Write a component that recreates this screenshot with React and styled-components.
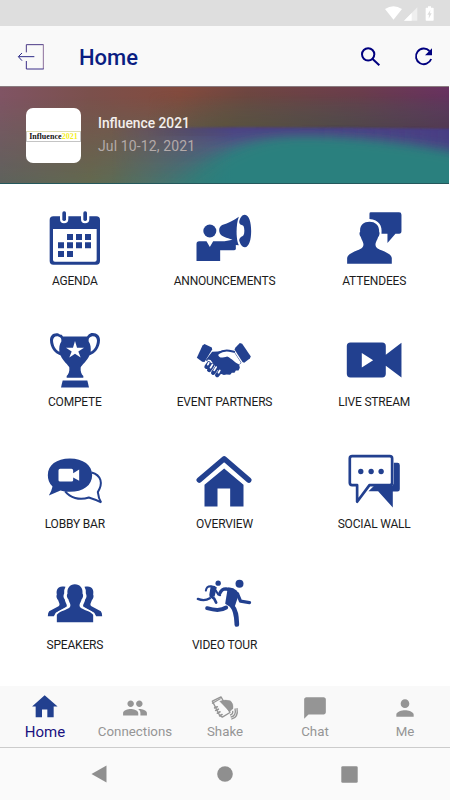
import React from "react";
import styled, { createGlobalStyle } from "styled-components";
import { MdPeople, MdChatBubble, MdPerson } from "react-icons/md";

const Agenda = () => (
  <Glyph viewBox="30 24 180 180">
    <path
      fillRule="evenodd"
      d="M55 49H75V57Q75 70 87 70Q100 70 100 57V49H138V57Q138 70 150 70Q163 70 163 57V49H184Q195 49 195 60V183Q195 194 184 194H55Q44 194 44 183V60Q44 49 55 49ZM54 87V179Q54 185 60 185H179Q185 185 185 179V87Z"
    />
    <rect x="82" y="34" width="11" height="29" rx="5" />
    <rect x="145" y="34" width="11" height="29" rx="5" />
    <path d="M96 102h18v18h-18zM123 102h18v18h-18zM150 102h18v18h-18zM69 127h18v18h-18zM96 127h18v18h-18zM123 127h18v18h-18zM150 127h18v18h-18zM69 153h18v18h-18zM96 153h18v18h-18z" />
  </Glyph>
);

const Announcements = () => (
  <Glyph viewBox="73.5 24 180 180">
    <circle cx="121" cy="93" r="19.5" />
    <path d="M89 124H111L121 141L131 124H165L189 119C171 113 156 111 151 100C147 90 149 80 158 75C176 69 194 60 208 50C202 65 200 91 202 111C203 124 206 131 208 136L199 135V147Q198 151 193 151H152V183H81V132Q81 124 89 124Z" />
    <path d="M226 44C239 45 245 67 245 93C245 119 239 141 226 142C218 142 212 133 209 121C211 110 218 111 222 106C226 99 225 85 222 78C218 74 211 77 209 66C211 54 217 44 226 44Z" />
  </Glyph>
);

const Attendees = () => (
  <Glyph viewBox="42.6 24 180 180">
    <path d="M123 37H208Q215 37 215 44V93Q215 101 208 101H197L173 129V101H155C158 77 148 60 119 57V41Q119 37 123 37Z" />
    <path d="M119 65C137 65 149 76 148 95C151 99 148 108 145 111C142 121 138 125 137 132C137 142 142 146 155 151C171 158 184 163 186 174V191H52V174C54 163 67 158 83 151C96 146 101 142 101 132C100 125 96 121 93 111C90 108 87 99 91 95C89 76 101 65 119 65Z" />
  </Glyph>
);

const Compete = () => (
  <Glyph viewBox="30 28.8 180 180">
    <path
      fillRule="evenodd"
      d="M76 43Q79 40 84 48H156Q161 40 169 38C185 36 195 45 195 59C195 83 179 101 163 105C157 121 139 134 137 141C136 154 139 160 145 167V172H95V167C101 160 104 154 103 141C101 134 83 121 77 105C61 101 45 83 45 59C45 45 55 36 70 39ZM70 48C60 46 54 52 54 61C55 76 62 88 73 94C72 82 73 72 79 63C80 55 78 50 70 48ZM170 48C162 50 160 55 161 63C167 72 168 82 167 94C178 88 185 76 186 61C186 52 180 46 170 48ZM120 62L114 82H93L110 93L103 111L120 100L137 111L130 93L147 82H126Z"
    />
    <path d="M83 180H157L162 201H78Z" />
  </Glyph>
);

const Partners = () => (
  <Glyph viewBox="73.5 28.8 180 180">
    <path d="M99 75L105 71L127 81L128 87L105 125L98 124L82 112Z" />
    <path d="M211 68L218 70L244 108L241 114L224 127L219 125L195 87L198 81Z" />
    <path d="M128 94L144 93L160 91L180 90L194 93L216 127L209 133L211 142L207 150L199 150L195 157L187 157L182 163L171 162L163 164L154 160L123 119L115 117L113 123L109 119Z" />
    <path d="M146 104C155 88 177 87 193 94L214 126L209 132C198 128 187 114 173 108C160 111 151 116 146 104Z" fill="#fff" />
    <path d="M145 99Q162 88 179 91L194 94" fill="none" stroke="#22408f" strokeWidth="6" strokeLinecap="round" />
    <path d="M118 129L111 139M129 134L119 149M141 143L131 157M152 153L143 164" stroke="#22408f" strokeWidth="13" strokeLinecap="round" />
    <path d="M118 127L115 133M129 132L123 142M140 140L134 150M151 150L147 157" stroke="#fff" strokeWidth="5" strokeLinecap="round" />
  </Glyph>
);

const Stream = () => (
  <Glyph viewBox="42.6 28.8 180 180">
    <path
      fillRule="evenodd"
      d="M62 66H157Q168 66 168 77V103L215 67V171L168 136V160Q168 171 157 171H62Q51 171 51 160V77Q51 66 62 66ZM96 98V141L130 119.5Z"
    />
  </Glyph>
);

const Lobby = () => (
  <Glyph viewBox="29.5 18.6 180 180">
    <path
      d="M169 83C199 91 204 116 188 142Q190 161 198 173Q181 164 161 158C132 168 104 158 90 140"
      fill="none"
      stroke="#22408f"
      strokeWidth="6"
    />
    <path d="M104 41C144 41 171 61 171 91C171 121 144 141 104 141C92 141 84 139 76 137L41 152Q49 140 52 125C42 115 38 103 38 91C38 61 64 41 104 41Z" />
    <path d="M75 72H109Q114 72 114 77V85L132 74V108L114 98V106Q114 110 109 110H75Q70 110 70 106V77Q70 72 75 72Z" fill="#fff" />
  </Glyph>
);

const Overview = () => (
  <Glyph viewBox="478.5 18.6 180 180">
    <path d="M494 106L569 42L643 106" fill="none" stroke="#22408f" strokeWidth="16" strokeLinecap="round" strokeLinejoin="round" />
    <path d="M569 71L627 120V185H587V131H549V185H510V120Z" />
  </Glyph>
);

const Social = () => (
  <Glyph viewBox="42.6 18.6 180 180">
    <path d="M192 54H203Q210 54 210 61V133Q210 140 203 140H189V188L145 139H116L133 123H181Q192 123 192 112Z" />
    <path
      d="M67 34H180Q187 34 187 41V114Q187 121 180 121H119L82 171V121H67Q60 121 60 114V41Q60 34 67 34Z"
      fill="#fff"
      stroke="#22408f"
      strokeWidth="8"
      strokeLinejoin="round"
    />
    <circle cx="93" cy="80" r="8" />
    <circle cx="124" cy="80" r="8" />
    <circle cx="154" cy="80" r="8" />
  </Glyph>
);

const Speakers = () => (
  <Glyph viewBox="29.5 8.4 180 180">
    <path d="M91 50C69 44 62 58 65 73C62 79 65 86 69 90C72 99 76 103 70 108L42 123Q38 127 38 138H56L62 128L94 110C98 104 90 98 89 88C84 83 84 75 87 70Q86 58 91 50Z" />
    <path d="M148 50C170 44 177 58 174 73C177 79 174 86 170 90C167 99 163 103 169 108L197 123Q201 127 201 138H183L177 128L145 110C141 104 149 98 150 88C155 83 155 75 152 70Q153 58 148 50Z" />
    <path
      d="M119 42C135 42 144 54 142 70C146 75 143 84 139 88C137 98 130 103 135 111C143 119 168 123 174 134V156H65V134C71 123 96 119 104 111C109 103 102 98 100 88C96 84 93 75 97 70C95 54 104 42 119 42Z"
      stroke="#fff"
      strokeWidth="10"
      paintOrder="stroke"
    />
  </Glyph>
);

const Tour = () => (
  <Glyph viewBox="478.5 8.4 180 180">
    <circle cx="615" cy="41" r="12" />
    <circle cx="551" cy="39" r="8" />
    <g fill="none" stroke="#22408f" strokeLinecap="round" strokeLinejoin="round">
      <path d="M556 69Q562 56 574 56L590 60" strokeWidth="10" />
      <path d="M609 71L618 93L645 97" strokeWidth="10" />
      <path d="M592 106C606 122 606 143 607 163" strokeWidth="14" />
      <path d="M518 114C545 122 560 122 575 112" strokeWidth="12" />
      <path d="M514 61Q516 48 528 48L540 50" strokeWidth="6" />
      <path d="M544 61L551 73L557 75" strokeWidth="6" />
      <path d="M490 86Q510 94 526 84" strokeWidth="7" />
      <path d="M529 78L539 85L545 97" strokeWidth="8" />
    </g>
    <path d="M580 52Q596 50 605 60L614 70L598 117L572 101Z" />
    <path d="M529 46L547 51L540 80L524 76Z" />
  </Glyph>
);

const HomeGlyph = () => (
  <TabGlyph viewBox="90 37.5 90 90" fill="#22408f">
    <path d="M134 44L172 77V78H161V110H142V87H126V110H107V78H97V77Z" />
  </TabGlyph>
);

const ShakeGlyph = () => (
  <TabGlyph viewBox="630 37.5 90 90" fill="none" stroke="#959595">
    <path d="M637 62L663 49L690 96L667 110L659 105Z" strokeWidth="4" strokeLinejoin="round" />
    <path d="M636 69L662 54" strokeWidth="4" />
    <path d="M659 62Q676 56 691 61Q701 69 699 84L689 94Z" fill="#959595" strokeWidth="1" />
    <path d="M644 82l8-3M647 90l8-4M652 98l8-4M659 106l7-4" strokeWidth="5" strokeLinecap="round" />
    <path d="M698 91Q700 101 690 104M705 84Q710 106 692 110M711 83Q716 112 694 116" strokeWidth="4" />
  </TabGlyph>
);

const tiles = [
  { label: "AGENDA", Icon: Agenda },
  { label: "ANNOUNCEMENTS", Icon: Announcements },
  { label: "ATTENDEES", Icon: Attendees },
  { label: "COMPETE", Icon: Compete },
  { label: "EVENT PARTNERS", Icon: Partners },
  { label: "LIVE STREAM", Icon: Stream },
  { label: "LOBBY BAR", Icon: Lobby },
  { label: "OVERVIEW", Icon: Overview },
  { label: "SOCIAL WALL", Icon: Social },
  { label: "SPEAKERS", Icon: Speakers },
  { label: "VIDEO TOUR", Icon: Tour },
];

const tabs = [
  { label: "Home", icon: <HomeGlyph />, active: true },
  { label: "Connections", icon: <MdPeople size={26} /> },
  { label: "Shake", icon: <ShakeGlyph /> },
  { label: "Chat", icon: <MdChatBubble size={26} /> },
  { label: "Me", icon: <MdPerson size={26} /> },
];

function BannerArt() {
  return (
    <Art viewBox="0 0 449 98" preserveAspectRatio="none">
      <defs>
        <linearGradient id="top">
          <stop offset="0" stopColor="#805464" />
          <stop offset="0.2" stopColor="#7b504c" />
          <stop offset="0.4" stopColor="#834b3e" />
          <stop offset="0.55" stopColor="#6f4641" />
          <stop offset="0.8" stopColor="#6b3d4c" />
          <stop offset="1" stopColor="#683260" />
        </linearGradient>
        <linearGradient id="low">
          <stop offset="0" stopColor="#5d625c" />
          <stop offset="0.2" stopColor="#62694f" />
          <stop offset="0.33" stopColor="#54705f" />
          <stop offset="0.5" stopColor="#347b78" />
        </linearGradient>
        <linearGradient id="mid">
          <stop offset="0.33" stopColor="#5b5038" stopOpacity="0" />
          <stop offset="0.5" stopColor="#5b5038" />
          <stop offset="0.75" stopColor="#504643" />
          <stop offset="1" stopColor="#52344e" />
        </linearGradient>
        <linearGradient id="blue" x2="0" y2="1">
          <stop offset="0" stopColor="#4b4084" />
          <stop offset="0.25" stopColor="#515a84" />
          <stop offset="0.75" stopColor="#3b787c" />
        </linearGradient>
        <linearGradient id="down" x2="0" y2="1">
          <stop offset="0.1" stopColor="#000" />
          <stop offset="1" stopColor="#fff" />
        </linearGradient>
        <linearGradient id="side">
          <stop offset="0.25" stopColor="#000" />
          <stop offset="0.52" stopColor="#fff" />
        </linearGradient>
        <linearGradient id="edge">
          <stop offset="0.6" stopColor="#473a84" stopOpacity="0" />
          <stop offset="1" stopColor="#473a84" />
        </linearGradient>
        <mask id="fadeDown">
          <rect width="449" height="98" fill="url(#down)" />
        </mask>
        <mask id="fadeMid">
          <rect width="449" height="50" fill="url(#down)" />
        </mask>
        <mask id="fadeSide">
          <rect width="449" height="98" fill="url(#side)" />
        </mask>
        <filter id="soft">
          <feGaussianBlur stdDeviation="1.2" />
        </filter>
        <filter id="softer" x="-20%" y="-40%" width="140%" height="180%">
          <feGaussianBlur stdDeviation="14 5" />
        </filter>
      </defs>
      <rect width="449" height="98" fill="url(#top)" />
      <rect width="449" height="98" fill="url(#low)" mask="url(#fadeDown)" />
      <rect width="449" height="50" fill="url(#mid)" mask="url(#fadeMid)" />
      <g mask="url(#fadeSide)">
        <path d="M60 43Q260 39 490 44V120H60Z" fill="url(#blue)" filter="url(#soft)" />
        <path d="M60 43Q260 39 490 44V80H60Z" fill="url(#edge)" filter="url(#soft)" />
        <path d="M150 130Q195 58 285 51Q380 48 500 75V140H150Z" fill="#2c807e" filter="url(#softer)" />
      </g>
      <path d="M0 97.5H449" stroke="#24585c" />
      <path d="M0 .5H449" stroke="#8a7c80" />
    </Art>
  );
}

export default function App() {
  return (
    <Screen>
      <GlobalStyle />
      <StatusBar>
        <svg width="17" height="14" viewBox="480 17 51 42" fill="#fff">
          <path d="M480 26Q505 9 531 26L505.5 58Z" />
        </svg>
        <svg width="14" height="14" viewBox="538 18 42 42" fill="#fff">
          <path d="M578 19V59H538Z" opacity="0.5" />
          <path d="M561 36V59H538Z" />
        </svg>
        <svg width="9" height="15" viewBox="601 16 27 45" fill="#fff">
          <path d="M610 17h9v4h6q2 0 2 2v35q0 2-2 2h-20q-2 0-2-2v-35q0-2 2-2h5z" />
          <path d="M617 28l-9 14h5l-1 12 9-16h-5z" fill="#dedede" />
        </svg>
      </StatusBar>
      <Header>
        <svg width="28" height="28" viewBox="51 129 84 84" fill="none">
          <path d="M79 157V134H130" stroke="#4b3a86" strokeWidth="3" />
          <path d="M130 133V207" stroke="#8c6f9c" strokeWidth="3" />
          <path d="M79 183V207H131" stroke="#3b2e88" strokeWidth="3" />
          <path d="M103 170H56M66 159L55 170L66 182" stroke="#2d2b88" strokeWidth="3" />
        </svg>
        <h1>Home</h1>
        <svg width="22" height="22" viewBox="401 136 66 66" fill="none" stroke="#00007f">
          <circle cx="428.5" cy="161" r="18.5" strokeWidth="6" />
          <path d="M441 174L462 194" strokeWidth="6" />
        </svg>
        <svg width="22" height="22" viewBox="564 138 66 66" fill="none" stroke="#00007f">
          <path d="M613.5 153A23.5 23.5 0 1 0 618.5 177" strokeWidth="5.5" />
          <path d="M621 145V166H600Z" fill="#00007f" stroke="none" />
        </svg>
      </Header>
      <Banner>
        <BannerArt />
        <Logo>
          <p>
            Influence<b>2021</b>
          </p>
        </Logo>
        <EventInfo>
          <h2>Influence 2021</h2>
          <p>Jul 10-12, 2021</p>
        </EventInfo>
      </Banner>
      <Grid>
        {tiles.map(({ label, Icon }) => (
          <Tile key={label}>
            <Icon />
            <p>{label}</p>
          </Tile>
        ))}
      </Grid>
      <TabBar>
        {tabs.map((tab) => (
          <Tab key={tab.label} $active={tab.active}>
            <span>{tab.icon}</span>
            <p>{tab.label}</p>
          </Tab>
        ))}
      </TabBar>
      <SystemNav>
        <svg width="16" height="18" viewBox="0 0 16 18">
          <path d="M15.5.5V17.5L.5 9Z" />
        </svg>
        <svg width="16" height="16" viewBox="0 0 16 16">
          <circle cx="8" cy="8" r="7.8" />
        </svg>
        <svg width="17" height="17" viewBox="0 0 17 17">
          <rect x=".3" y=".3" width="16.4" height="16.4" rx="1.3" />
        </svg>
      </SystemNav>
    </Screen>
  );
}

const GlobalStyle = createGlobalStyle`
  * {
    box-sizing: border-box;
    margin: 0;
    padding: 0;
  }
  body {
    background: #ffffff;
    font-family: Roboto, "Liberation Sans", sans-serif;
  }
  svg {
    display: block;
    flex-shrink: 0;
  }
`;

const Screen = styled.div`
  width: 450px;
  height: 800px;
  display: flex;
  flex-direction: column;
  overflow: hidden;
  background: #ffffff;
`;

const StatusBar = styled.div`
  height: 26px;
  flex-shrink: 0;
  display: flex;
  justify-content: flex-end;
  align-items: center;
  padding-right: 16px;
  background: #dedede;
  svg:nth-child(2) {
    margin: 1px 7px 0 2px;
  }
`;

const Header = styled.header`
  height: 60px;
  flex-shrink: 0;
  display: flex;
  align-items: center;
  padding: 2px 15px 0 17px;
  background: #f9f9f9;
  h1 {
    flex: 1;
    margin-left: 34px;
    padding-top: 2px;
    font-size: 22px;
    font-weight: 500;
    line-height: 28px;
    color: #0a1e82;
  }
  svg:last-child {
    margin-left: 32px;
  }
`;

const Banner = styled.section`
  position: relative;
  width: 449px;
  height: 98px;
  flex-shrink: 0;
  display: flex;
  align-items: center;
  padding-left: 26px;
`;

const Art = styled.svg`
  position: absolute;
  inset: 0;
  width: 100%;
  height: 100%;
`;

const Logo = styled.div`
  position: relative;
  width: 55px;
  height: 55px;
  display: flex;
  align-items: center;
  border-radius: 7px;
  background: #ffffff;
  p {
    width: 55px;
    height: 11px;
    margin-top: 2px;
    border: 1px solid #c4c4c4;
    border-top-color: #dedcae;
    font-family: "Liberation Serif", serif;
    font-size: 8px;
    font-weight: 700;
    letter-spacing: 0.05px;
    line-height: 9px;
    text-align: center;
    white-space: nowrap;
    color: #111111;
  }
  b {
    color: #f4ef1e;
  }
`;

const EventInfo = styled.div`
  position: relative;
  margin-left: 17px;
  h2 {
    font-size: 13.8px;
    font-weight: 500;
    line-height: 23px;
    color: #f3efee;
  }
  p {
    font-size: 14px;
    letter-spacing: 0.12px;
    line-height: 23px;
    color: #b3aaa9;
  }
`;

const Grid = styled.main`
  width: 449px;
  height: 502px;
  flex-shrink: 0;
  display: grid;
  grid-template-columns: repeat(3, 1fr);
  grid-auto-rows: 121.6px;
  padding-top: 24px;
`;

const Tile = styled.div`
  display: flex;
  flex-direction: column;
  align-items: center;
  p {
    margin-top: 4.6px;
    font-size: 12px;
    letter-spacing: -0.18px;
    line-height: 16px;
    color: #1c1c1c;
  }
`;

const Glyph = styled.svg`
  width: 60px;
  height: 60px;
  fill: #22408f;
`;

const TabGlyph = styled.svg`
  width: 30px;
  height: 30px;
`;

const TabBar = styled.nav`
  height: 62px;
  flex-shrink: 0;
  display: grid;
  grid-template-columns: repeat(5, 1fr);
  padding-top: 6.5px;
  background: #f9f9f9;
  border-bottom: 1px solid #cccccc;
`;

const Tab = styled.div`
  display: flex;
  flex-direction: column;
  align-items: center;
  color: #959595;
  span {
    height: 30px;
    display: flex;
    align-items: center;
  }
  p {
    font-size: ${(props) => (props.$active ? "15px" : "13.3px")};
    line-height: 18px;
    color: ${(props) => (props.$active ? "#1a1180" : "#959595")};
  }
`;

const SystemNav = styled.div`
  flex: 1;
  display: flex;
  justify-content: space-between;
  align-items: center;
  padding: 0 92px 0 91px;
  background: #fafafa;
  fill: #8f8f8f;
  svg:nth-child(2) {
    margin-left: 2px;
  }
`;
